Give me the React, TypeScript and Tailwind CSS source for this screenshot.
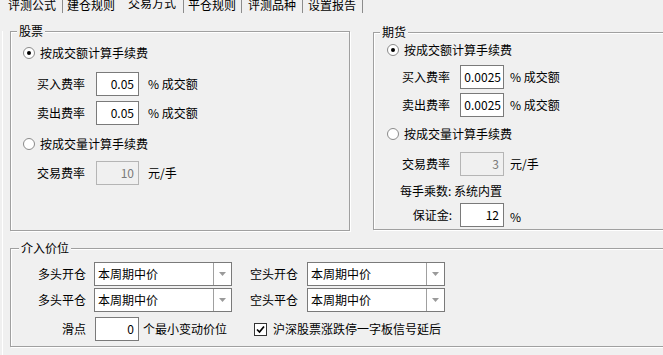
import React from "react";

const tabs = [
  { name: "评测公式", w: "w-[63px]", pl: "pl-[8px]", line: true, on: false },
  { name: "建仓规则", w: "w-[60px]", pl: "pl-[4px]", line: false, on: false },
  { name: "交易方式", w: "w-[61px]", pl: "pl-[5px]", line: true, on: true },
  { name: "平仓规则", w: "w-[58px]", pl: "pl-[4px]", line: true, on: false },
  { name: "评测品种", w: "w-[61px]", pl: "pl-[6px]", line: true, on: false },
  { name: "设置报告", w: "w-[60px]", pl: "pl-[5px]", line: true, on: false },
];

const Radio = ({ checked, label, className }: { checked?: boolean; label: string; className?: string }) => (
  <div className={"flex h-[16px] items-center " + (className || "")}>
    <span className="flex h-[12px] w-[12px] items-center justify-center rounded-full border border-[#8a8a8a] bg-white">
      {checked && <span className="h-[4px] w-[4px] rounded-full bg-black" />}
    </span>
    <span className="ml-[5px]">{label}</span>
  </div>
);

const NumBox = ({ value, disabled, w = "w-[43px]", pr = "pr-[4px]" }: { value: string; disabled?: boolean; w?: string; pr?: string }) => (
  <div
    className={
      "flex h-[24px] items-center justify-end border " +
      w +
      " " +
      pr +
      (disabled ? " border-[#b5b5b5] bg-[#f0f0f0] text-[#7a7a7a]" : " border-[#7a7a7a] bg-white")
    }
  >
    {value}
  </div>
);

const Combo = ({ value }: { value: string }) => (
  <div className="flex h-[24px] w-[138px] border border-[#7a7a7a] bg-white">
    <div className="flex w-[118px] items-center pl-[3px]">{value}</div>
    <div className="flex flex-1 items-center justify-center border-l border-[#a0a0a0]">
      <svg width="7" height="4" viewBox="0 0 7 4">
        <path d="M0 0 L7 0 L3.5 4 Z" fill="#9a9a9a" />
      </svg>
    </div>
  </div>
);

const Group = ({ title, className, titleLeft = "left-[6px]", children }: { title: string; className: string; titleLeft?: string; children: React.ReactNode }) => (
  <div className={"relative border border-[#a0a0a0] shadow-[1px_1px_0_#fff,inset_1px_1px_0_#fff] " + className}>
    <span className={"absolute -top-[8px] bg-[#f0f0f0] px-[2px] leading-[14px] " + titleLeft}>{title}</span>
    {children}
  </div>
);

const App = () => {
  return (
    <div className="h-[355px] w-[663px] overflow-hidden bg-[#f0f0f0] font-['Noto_Sans_CJK_SC',sans-serif] text-[12px] leading-[14px] text-black">
      {/* tab strip, cut off at the top */}
      <div className="flex h-[13px] overflow-hidden">
        {tabs.map((t) => (
          <div
            key={t.name}
            className={t.w + " " + t.pl + " h-[13px] " + (t.line ? "border-r border-[#8c8c8c]" : "")}
          >
            <span className={"block leading-[14px] " + (t.on ? "-mt-[4px]" : "-mt-[2px]")}>{t.name}</span>
          </div>
        ))}
      </div>

      <div className="ml-[2px] h-[342px] border-l border-white">
        <div className="mt-[18px] flex items-start">
          <Group title="股票" className="ml-[7px] h-[200px] w-[340px] shrink-0">
            <div className="flex flex-col pl-[12px]">
              <Radio checked label="按成交额计算手续费" className="mt-[13px]" />
              <div className="ml-[14px] mt-[11px] flex items-center">
                <span className="w-[59px]">买入费率</span>
                <NumBox value="0.05" />
                <span className="ml-[9px]">% 成交额</span>
              </div>
              <div className="ml-[14px] mt-[5px] flex items-center">
                <span className="w-[59px]">卖出费率</span>
                <NumBox value="0.05" />
                <span className="ml-[9px]">% 成交额</span>
              </div>
              <Radio label="按成交量计算手续费" className="mt-[11px]" />
              <div className="ml-[14px] mt-[9px] flex items-center">
                <span className="w-[59px]">交易费率</span>
                <NumBox value="10" disabled />
                <span className="ml-[9px]">元/手</span>
              </div>
            </div>
          </Group>

          <Group title="期货" className="ml-[23px] mt-[1px] h-[198px] w-[320px] shrink-0">
            <div className="flex flex-col pl-[13px]">
              <Radio checked label="按成交额计算手续费" className="mt-[9px]" />
              <div className="ml-[15px] mt-[7px] flex items-center">
                <span className="w-[58px]">买入费率</span>
                <NumBox value="0.0025" w="w-[44px]" pr="pr-[2px]" />
                <span className="ml-[6px]">% 成交额</span>
              </div>
              <div className="ml-[15px] mt-[4px] flex items-center">
                <span className="w-[58px]">卖出费率</span>
                <NumBox value="0.0025" w="w-[44px]" pr="pr-[2px]" />
                <span className="ml-[6px]">% 成交额</span>
              </div>
              <Radio label="按成交量计算手续费" className="mt-[9px]" />
              <div className="ml-[15px] mt-[10px] flex items-center">
                <span className="w-[58px]">交易费率</span>
                <NumBox value="3" disabled w="w-[44px]" />
                <span className="ml-[6px]">元/手</span>
              </div>
              <div className="ml-[13px] mt-[7px] flex h-[16px] items-center">每手乘数: 系统内置</div>
              <div className="ml-[15px] mt-[4px] flex items-center">
                <span className="w-[58px] pr-[8px] text-right">保证金:</span>
                <NumBox value="12" w="w-[44px]" />
                <span className="ml-[6px] mt-[3px]">%</span>
              </div>
            </div>
          </Group>
        </div>

        <Group title="介入价位" titleLeft="left-[8px]" className="ml-[7px] mt-[17px] h-[99px] w-[700px]">
          <div className="flex flex-col">
            <div className="mt-[13px] flex items-center">
              <div className="flex w-[239px] items-center">
                <span className="w-[75px] text-right">多头开仓</span>
                <div className="ml-[8px]">
                  <Combo value="本周期中价" />
                </div>
              </div>
              <span className="w-[48px]">空头开仓</span>
              <div className="ml-[9px]">
                <Combo value="本周期中价" />
              </div>
            </div>
            <div className="mt-[2px] flex items-center">
              <div className="flex w-[239px] items-center">
                <span className="w-[75px] text-right">多头平仓</span>
                <div className="ml-[8px]">
                  <Combo value="本周期中价" />
                </div>
              </div>
              <span className="w-[48px]">空头平仓</span>
              <div className="ml-[9px]">
                <Combo value="本周期中价" />
              </div>
            </div>
            <div className="mt-[5px] flex items-center">
              <div className="flex w-[239px] items-center">
                <span className="w-[75px] text-right">滑点</span>
                <div className="ml-[9px]">
                  <NumBox value="0" w="w-[44px]" />
                </div>
                <span className="ml-[4px]">个最小变动价位</span>
              </div>
              <div className="ml-[4px] flex items-center">
                <span className="flex h-[13px] w-[13px] items-center justify-center border border-[#333] bg-white">
                  <svg width="11" height="11" viewBox="0 0 11 11">
                    <path d="M2 5.5 L4.5 8 L9 2.5" fill="none" stroke="#000" strokeWidth="1.7" />
                  </svg>
                </span>
                <span className="ml-[6px]">沪深股票涨跌停一字板信号延后</span>
              </div>
            </div>
          </div>
        </Group>
      </div>
    </div>
  );
};

export default App;
